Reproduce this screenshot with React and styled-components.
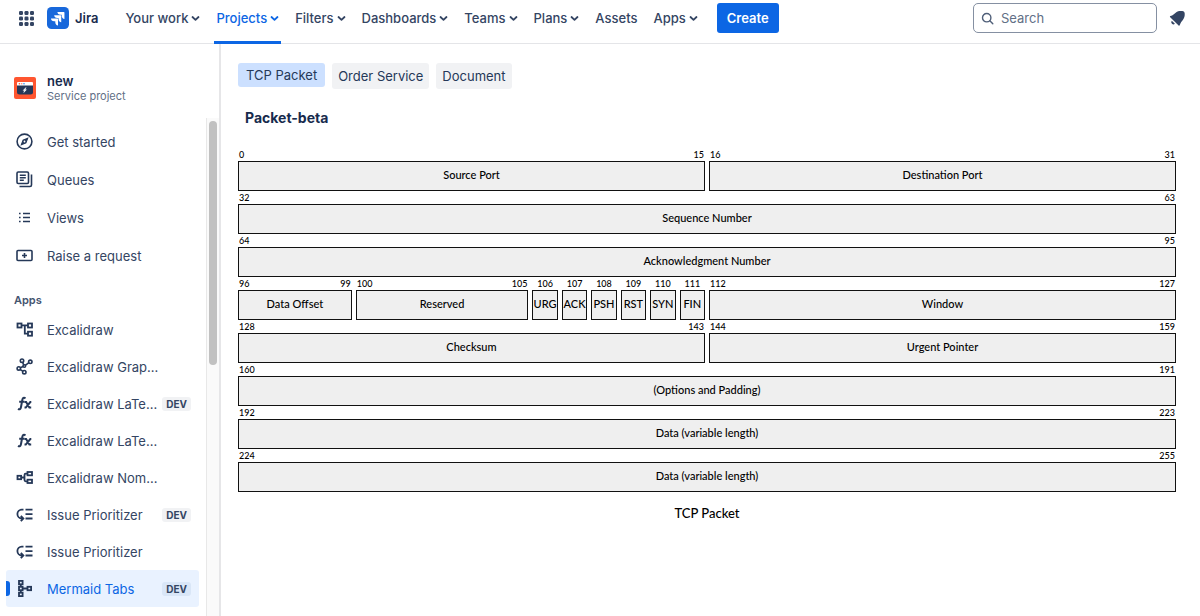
import React from "react";
import styled, { createGlobalStyle } from "styled-components";

const GlobalStyle = createGlobalStyle`
  * { box-sizing: border-box; }
  body {
    margin: 0;
    background: #fff;
    color: #42526e;
    font-family: Inter, "Liberation Sans", sans-serif;
    font-size: 13px;
    line-height: 20px;
  }
  button, input { font: inherit; color: inherit; }
  a { color: inherit; text-decoration: none; }
  svg { display: block; flex: none; }
`;

const Page = styled.div`
  display: flex;
  flex-direction: column;
  min-height: 100vh;
`;

const Header = styled.header`
  display: flex;
  align-items: flex-start;
  padding: 0 14px 0 18px;
  box-shadow: inset 0 -1px #e4e5e8;
`;

const HeaderGroup = styled.div`
  display: flex;
  align-items: center;
  height: 36px;
`;

const IconButton = styled.button`
  display: flex;
  padding: 0;
  border: 0;
  background: none;
  color: #344563;
`;

const Brand = styled.a`
  display: flex;
  align-items: center;
  gap: 6px;
  margin-left: 12px;
  color: #172b4d;
  font-weight: 600;
`;

const Nav = styled.nav`
  display: flex;
  gap: 12px;
  margin-left: 25px;
`;

const NavItem = styled.button`
  display: flex;
  align-items: center;
  gap: 3px;
  height: 44px;
  padding: 0 2px 5px;
  border: 0;
  border-bottom: 3px solid ${(p) => (p.$active ? "#0c66e4" : "transparent")};
  background: none;
  color: ${(p) => (p.$active ? "#0c66e4" : "#344563")};
  font-weight: 500;
  white-space: nowrap;
`;

const CreateButton = styled.button`
  height: 30px;
  padding: 0 10px;
  border: 0;
  border-radius: 3px;
  background: #0c66e4;
  color: #fff;
  font-weight: 600;
`;

const SearchBox = styled.label`
  display: flex;
  align-items: center;
  gap: 7px;
  width: 184px;
  height: 30px;
  padding: 0 7px;
  border: 1px solid #8590a2;
  border-radius: 5px;
  color: #505f79;
`;

const SearchInput = styled.input`
  flex: 1;
  min-width: 0;
  padding: 0;
  border: 0;
  outline: 0;
  background: none;
  &::placeholder { color: #626f86; opacity: 1; }
`;

const Body = styled.div`
  display: flex;
  flex: 1;
`;

const Sidebar = styled.aside`
  display: flex;
  flex-direction: column;
  flex: none;
  width: 221px;
  border-right: 2px solid #e6e6e8;
`;

const Project = styled.div`
  display: flex;
  align-items: center;
  gap: 11px;
  padding: 14px 14px 0;
  height: 74px;
`;

const ProjectName = styled.div`
  color: #172b4d;
  font-weight: 600;
  line-height: 16px;
`;

const ProjectType = styled.div`
  color: #626f86;
  font-size: 11px;
  line-height: 14px;
`;

const Scroller = styled.div`
  display: flex;
  flex: 1;
`;

const SideNav = styled.nav`
  flex: 1;
  min-width: 0;
  padding: 5px 7px 9px 6px;
`;

const SideList = styled.ul`
  display: grid;
  gap: ${(p) => p.$gap || 0}px;
  margin: 0;
  padding: 0;
  list-style: none;
`;

const SideHeading = styled.h2`
  margin: 18px 8px 3px;
  font-size: 11px;
  line-height: 16px;
  font-weight: 600;
  color: #44546f;
`;

const SideLink = styled.a`
  display: flex;
  align-items: center;
  height: 37px;
  padding-right: 8px;
  border-radius: 3px;
  background: ${(p) => (p.$active ? "#e9f2ff" : "none")};
  color: ${(p) => (p.$active ? "#0c66e4" : "#344563")};
  &::before {
    content: "";
    width: 4px;
    height: 15px;
    margin-right: 5px;
    border-radius: 0 3px 3px 0;
    background: ${(p) => (p.$active ? "#0c66e4" : "transparent")};
  }
`;

const SideIcon = styled.span`
  display: flex;
  width: 32px;
  color: #253858;
`;

const SideLabel = styled.span`
  flex: 1;
  white-space: nowrap;
`;

const Badge = styled.span`
  padding: 0 4px;
  border-radius: 3px;
  background: ${(p) => (p.$active ? "#d9e6f7" : "#f1f2f4")};
  color: #344563;
  font-size: 10px;
  line-height: 14px;
  font-weight: 700;
`;

const Track = styled.div`
  width: 13px;
  padding: 3px 2px 0;
  border-left: 1px solid #e8e8e8;
  background: #fafafa;
`;

const Thumb = styled.div`
  width: 8px;
  height: 244px;
  border-radius: 4px;
  background: #c1c1c1;
`;

const Main = styled.main`
  flex: 1;
  min-width: 0;
  padding: 19px 24px 24px 17px;
`;

const Tabs = styled.div`
  display: flex;
  align-items: flex-start;
  gap: 7px;
`;

const Tab = styled.button`
  height: ${(p) => (p.$active ? 24 : 26)}px;
  padding: 0 ${(p) => (p.$active ? 8 : 6)}px;
  border: 0;
  border-radius: 3px;
  background: ${(p) => (p.$active ? "#cce0ff" : "#f1f2f4")};
  color: #253858;
`;

const Title = styled.h1`
  margin: 19px 7px 20px;
  color: #172b4d;
  font-size: 14px;
  line-height: 20px;
  font-weight: 700;
`;

const Packet = styled.figure`
  margin: 0;
  color: #000;
  font-family: Lato, sans-serif;
  font-weight: 500;
`;

const Word = styled.div`
  display: grid;
  grid-template-columns: repeat(32, minmax(0, 1fr));
  column-gap: 4px;
`;

const Field = styled.div`
  grid-column: span ${(p) => p.$bits};
  min-width: 0;
`;

const Bits = styled.div`
  display: flex;
  justify-content: ${(p) => (p.$single ? "center" : "space-between")};
  padding: 1px 1px 0;
  font-size: 9px;
  line-height: 12px;
`;

const Block = styled.div`
  display: flex;
  align-items: center;
  justify-content: center;
  height: 30px;
  padding-bottom: 2px;
  border: 1px solid #111;
  background: #efefef;
  font-size: 11px;
  line-height: 16px;
  white-space: nowrap;
`;

const Caption = styled.figcaption`
  margin-top: 11px;
  font-size: 13px;
  line-height: 20px;
  text-align: center;
`;

const Chevron = () => (
  <svg width="9" height="8" viewBox="0 0 9 8" fill="none" stroke="currentColor" strokeWidth="1.8" strokeLinecap="round" strokeLinejoin="round">
    <path d="M1.5 3 4.5 5.8 7.5 3" />
  </svg>
);

const AppSwitcherIcon = () => (
  <svg width="17" height="17" viewBox="0 0 17 17" fill="currentColor">
    {[1, 6.5, 12].map((y) => [1, 6.5, 12].map((x) => <rect key={`${x}-${y}`} x={x} y={y} width="4" height="4" rx="1.2" />))}
  </svg>
);

const JiraLogo = () => (
  <svg width="22" height="22" viewBox="0 0 24 24">
    <rect width="24" height="24" rx="5" fill="#1868db" />
    <path fill="#fff" d="M9.051 15.434H7.734c-1.988 0-3.413-1.218-3.413-3h7.085c.367 0 .605.26.605.63v7.13c-1.784 0-2.96-1.435-2.96-3.427zm3.5-3.543h-1.318c-1.987 0-3.413-1.196-3.413-2.978h7.085c.367 0 .627.239.627.608v7.13c-1.784 0-2.981-1.435-2.981-3.427zm3.52-3.522h-1.317c-1.987 0-3.413-1.217-3.413-3h7.085c.367 0 .605.262.605.61v7.129c-1.784 0-2.96-1.435-2.96-3.427z" />
  </svg>
);

const SearchIcon = () => (
  <svg width="13" height="13" viewBox="0 0 13 13" fill="none" stroke="currentColor" strokeWidth="1.4" strokeLinecap="round">
    <circle cx="5.7" cy="5.7" r="4.2" />
    <path d="m8.8 8.8 3 3" />
  </svg>
);

const BellIcon = () => (
  <svg width="17" height="17" viewBox="0 0 17 17" fill="currentColor">
    <path d="M1.2 7.3c-.5-.4-.4-1 .2-1.2C4 5.3 5.3 4 7 2.5 8.6 1.1 11 .8 13.3 1.1c1.5.2 2.3 1 2.4 2.4.2 2.3-.3 4.5-1.7 6.2-1.3 1.6-2.4 2.9-3.2 5.4-.2.6-.8.7-1.2.3z" />
    <path d="M2.8 10.7 5.9 13.8A2.2 2.2 0 0 1 2.8 10.7z" />
  </svg>
);

const ProjectAvatar = () => (
  <svg width="22" height="22" viewBox="0 0 22 22">
    <rect width="22" height="22" rx="2" fill="#ff5630" />
    <path d="M3 6a1 1 0 0 1 1-1h14a1 1 0 0 1 1 1v3H3z" fill="#fff" />
    <path d="M3 8.5h16V15a2.5 2.5 0 0 1-2.5 2.5h-11A2.5 2.5 0 0 1 3 15z" fill="#253858" />
    <circle cx="5.4" cy="6.8" r=".8" fill="#ff5630" />
    <circle cx="7.7" cy="6.8" r=".8" fill="#ff8b73" />
    <circle cx="10" cy="6.8" r=".8" fill="#2684ff" />
    <path d="m11.9 10.5-2.7 2.9h1.3l-.7 2.1 2.6-2.8h-1.2z" fill="#fff" stroke="#fff" strokeWidth=".5" />
  </svg>
);

const icons = {
  compass: (
    <>
      <circle cx="9.5" cy="9.5" r="7.4" strokeWidth="1.6" />
      <path d="m12.6 6.4-1.7 4.5-4.5 1.7 1.7-4.5z" strokeWidth="1.2" fill="currentColor" />
      <circle cx="9.5" cy="9.5" r=".9" fill="#fff" stroke="none" />
    </>
  ),
  queues: (
    <g strokeWidth="1.6">
      <rect x="2" y="2" width="11.5" height="11.5" rx="1.2" />
      <path d="M4.8 5.3h6M4.8 7.8h6M4.8 10.3h4M16.5 4.5V15a1.5 1.5 0 0 1-1.5 1.5H4.5" />
    </g>
  ),
  views: <path d="M4 5.5h1.6M4 9.5h1.6M4 13.5h1.6M8 5.5h7M8 9.5h7M8 13.5h7" strokeWidth="1.6" />,
  request: (
    <g strokeWidth="1.6">
      <rect x="2" y="4.5" width="15" height="10" rx="1" />
      <path d="M9.5 7v5M7 9.5h5" />
    </g>
  ),
  tree: (
    <>
      <rect x="2.5" y="3.5" width="4" height="4" />
      <rect x="13" y="3.5" width="4" height="4" />
      <rect x="13" y="11.7" width="4" height="4" />
      <path d="M6.5 5.4H13M9.8 5.4v8.3H13" />
    </>
  ),
  graph: (
    <g strokeWidth="1.6">
      <circle cx="7" cy="3.7" r="1.7" />
      <circle cx="15.3" cy="4.8" r="1.7" />
      <circle cx="3.8" cy="11.4" r="1.7" />
      <circle cx="9.3" cy="15.2" r="1.7" />
      <circle cx="9.3" cy="9" r="1.3" />
      <path d="M7.5 5.2 8.8 8M13.9 5.7 10.3 8.3M8.1 9.6l-2.8 1.2M5.1 12.4l2.9 1.9" />
    </g>
  ),
  fx: (
    <>
      <path d="M10.5 4.3C8.8 3.2 7.7 4 7.3 6L6 13c-.4 2.2-1.4 2.8-3 1.9M4.2 7.8h5.3" strokeWidth="2" />
      <path d="M9.5 8h1.600l3.300 5.600h1.800M16.300 8h-1l-4.500 5.600H9.500" strokeWidth="2" />
    </>
  ),
  nomnoml: (
    <>
      <rect x="2.5" y="7.8" width="3.6" height="3.4" />
      <rect x="12.5" y="4" width="4.5" height="3.3" />
      <rect x="12.5" y="11.7" width="4.5" height="3.3" />
      <path d="M6.1 9.5h3.4M12.5 5.7h-1.8a1.2 1.2 0 0 0-1.2 1.2v5.2a1.2 1.2 0 0 0 1.2 1.2h1.8" />
    </>
  ),
  priority: (
    <>
      <path d="M10.5 4.7h7M10.5 9.1h7M10.5 13.5h7" />
      <path d="M8.500 4.700H6.800a4.400 4.400 0 0 0 0 8.800h1.200M5.800 10.800l2.600 2.700-2.600 2.700" />
    </>
  ),
  mermaid: (
    <>
      <rect x="4" y="1.9" width="3.6" height="3.4" />
      <rect x="4" y="7.8" width="3.6" height="3.4" />
      <rect x="4" y="13.7" width="3.6" height="3.4" />
      <rect x="12.5" y="7.8" width="3.6" height="3.4" />
      <path d="M5.8 5.3v2.5M5.8 11.2v2.5M7.6 9.5h4.9" />
    </>
  ),
};

const Glyph = ({ name }) => (
  <svg width="19" height="19" viewBox="0 0 19 19" fill="none" stroke="currentColor" strokeWidth="1.8">
    {icons[name]}
  </svg>
);

const navItems = [
  { label: "Your work", menu: true },
  { label: "Projects", menu: true, active: true },
  { label: "Filters", menu: true },
  { label: "Dashboards", menu: true },
  { label: "Teams", menu: true },
  { label: "Plans", menu: true },
  { label: "Assets" },
  { label: "Apps", menu: true },
];

const mainLinks = [
  { label: "Get started", icon: "compass" },
  { label: "Queues", icon: "queues" },
  { label: "Views", icon: "views" },
  { label: "Raise a request", icon: "request" },
];

const appLinks = [
  { label: "Excalidraw", icon: "tree" },
  { label: "Excalidraw Grap...", icon: "graph" },
  { label: "Excalidraw LaTe...", icon: "fx", dev: true },
  { label: "Excalidraw LaTe...", icon: "fx" },
  { label: "Excalidraw Nom...", icon: "nomnoml" },
  { label: "Issue Prioritizer", icon: "priority", dev: true },
  { label: "Issue Prioritizer", icon: "priority" },
  { label: "Mermaid Tabs", icon: "mermaid", dev: true, active: true },
];

const words = [
  [[0, 15, "Source Port"], [16, 31, "Destination Port"]],
  [[32, 63, "Sequence Number"]],
  [[64, 95, "Acknowledgment Number"]],
  [
    [96, 99, "Data Offset"],
    [100, 105, "Reserved"],
    [106, 106, "URG"],
    [107, 107, "ACK"],
    [108, 108, "PSH"],
    [109, 109, "RST"],
    [110, 110, "SYN"],
    [111, 111, "FIN"],
    [112, 127, "Window"],
  ],
  [[128, 143, "Checksum"], [144, 159, "Urgent Pointer"]],
  [[160, 191, "(Options and Padding)"]],
  [[192, 223, "Data (variable length)"]],
  [[224, 255, "Data (variable length)"]],
];

const SideItems = ({ items, gap }) => (
  <SideList $gap={gap}>
    {items.map((item, i) => (
      <li key={i}>
        <SideLink href="#" $active={item.active}>
          <SideIcon><Glyph name={item.icon} /></SideIcon>
          <SideLabel>{item.label}</SideLabel>
          {item.dev && <Badge $active={item.active}>DEV</Badge>}
        </SideLink>
      </li>
    ))}
  </SideList>
);

const Spacer = styled.div`
  flex: 1;
`;

const CreateSlot = styled(HeaderGroup)`
  margin-left: 17px;
`;

const Tools = styled(HeaderGroup)`
  gap: 12px;
`;

export default function App() {
  return (
    <Page>
      <GlobalStyle />
      <Header>
        <HeaderGroup>
          <IconButton aria-label="Switch app"><AppSwitcherIcon /></IconButton>
          <Brand href="#"><JiraLogo />Jira</Brand>
        </HeaderGroup>
        <Nav>
          {navItems.map((item) => (
            <NavItem key={item.label} as={item.menu ? "button" : "a"} href={item.menu ? undefined : "#"} $active={item.active}>
              {item.label}
              {item.menu && <Chevron />}
            </NavItem>
          ))}
        </Nav>
        <CreateSlot><CreateButton>Create</CreateButton></CreateSlot>
        <Spacer />
        <Tools>
          <SearchBox>
            <SearchIcon />
            <SearchInput type="search" placeholder="Search" aria-label="Search" />
          </SearchBox>
          <IconButton aria-label="Notifications"><BellIcon /></IconButton>
        </Tools>
      </Header>
      <Body>
        <Sidebar>
          <Project>
            <ProjectAvatar />
            <div>
              <ProjectName>new</ProjectName>
              <ProjectType>Service project</ProjectType>
            </div>
          </Project>
          <Scroller>
            <SideNav>
              <SideItems items={mainLinks} gap={1} />
              <SideHeading>Apps</SideHeading>
              <SideItems items={appLinks} />
            </SideNav>
            <Track><Thumb /></Track>
          </Scroller>
        </Sidebar>
        <Main>
          <Tabs role="tablist">
            <Tab role="tab" aria-selected="true" $active>TCP Packet</Tab>
            <Tab role="tab" aria-selected="false">Order Service</Tab>
            <Tab role="tab" aria-selected="false">Document</Tab>
          </Tabs>
          <Title>Packet-beta</Title>
          <Packet>
            {words.map((fields, i) => (
              <Word key={i}>
                {fields.map(([start, end, label]) => (
                  <Field key={start} $bits={end - start + 1}>
                    <Bits $single={start === end}>
                      <span>{start}</span>
                      {start !== end && <span>{end}</span>}
                    </Bits>
                    <Block>{label}</Block>
                  </Field>
                ))}
              </Word>
            ))}
            <Caption>TCP Packet</Caption>
          </Packet>
        </Main>
      </Body>
    </Page>
  );
}
